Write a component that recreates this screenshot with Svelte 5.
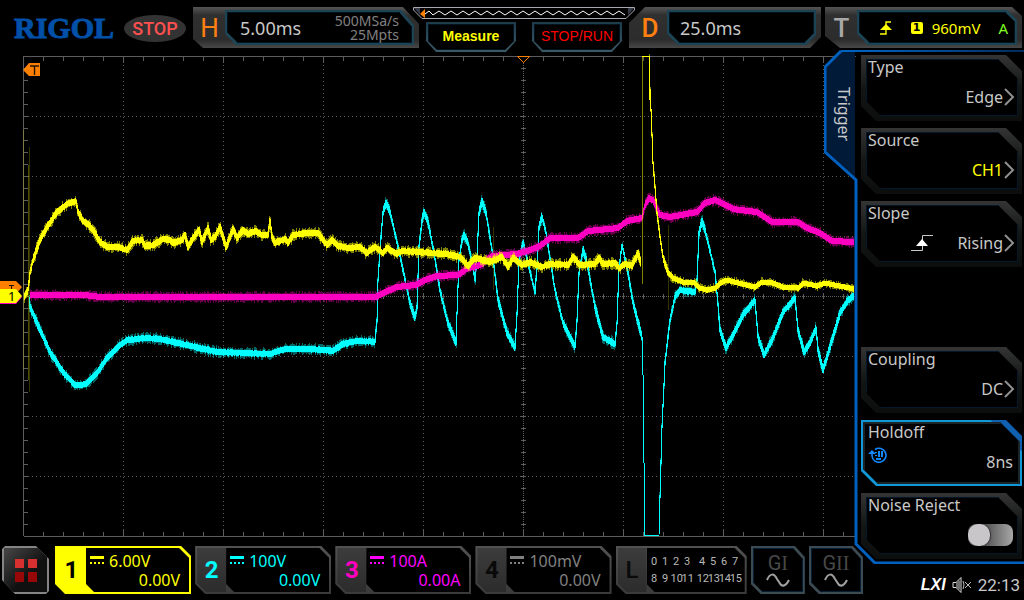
<script lang="ts">
  type Point = [number, number];

  let noiseReject = $state(false);

  const menu = [
    { label: 'Type', value: 'Edge' },
    { label: 'Source', value: 'CH1', accent: true },
    { label: 'Slope', value: 'Rising', icon: 'rising' },
    null,
    { label: 'Coupling', value: 'DC' },
    { label: 'Holdoff', value: '8ns', icon: 'knob', active: true }
  ];

  const channels = [
    { id: '1', scale: '6.00V', offset: '0.00V', tone: 'yellow' },
    { id: '2', scale: '100V', offset: '0.00V', tone: 'cyan' },
    { id: '3', scale: '100A', offset: '0.00A', tone: 'magenta' },
    { id: '4', scale: '100mV', offset: '0.00V', tone: 'off' }
  ];

  const yellow: Point[] = [
    [24, 297], [28, 290], [30, 273], [33, 260], [40, 240], [47, 227], [57, 212], [67, 204], [76, 201],
    [78, 212], [83, 221], [89, 225], [95, 233], [100, 242], [107, 247], [117, 247], [127, 250], [133, 241],
    [142, 240], [145, 246], [153, 245], [163, 239], [170, 240], [173, 243], [182, 240], [185, 235], [188, 247],
    [193, 238], [199, 230], [202, 242], [208, 228], [211, 240], [215, 237], [220, 227], [226, 247], [233, 229],
    [237, 238], [243, 230], [248, 234], [255, 231], [262, 235], [268, 235], [270, 220], [272, 237], [275, 243],
    [285, 239], [288, 243], [293, 235], [307, 233], [318, 233], [323, 240], [327, 245], [332, 240], [338, 246],
    [348, 248], [360, 247], [367, 253], [375, 247], [383, 253], [387, 248], [397, 254], [402, 251], [420, 252],
    [430, 253], [447, 254], [460, 257], [468, 266], [475, 258], [490, 262], [502, 257], [508, 267], [513, 258],
    [522, 265], [530, 262], [542, 267], [550, 264], [568, 265], [573, 257], [580, 265], [595, 264], [599, 258],
    [603, 264], [615, 263], [619, 268], [625, 264], [632, 266], [638, 253], [641, 263]
  ];
  const yellowTail: Point[] = [
    [649, 57], [650, 90], [651, 110], [652, 135], [653, 163], [655, 187], [657, 213], [660, 237], [663, 257],
    [668, 272], [673, 278], [683, 282], [695, 283], [700, 288], [707, 290], [715, 288], [722, 282], [727, 280],
    [755, 287], [762, 282], [773, 283], [783, 287], [798, 288], [803, 283], [817, 286], [825, 283], [854, 289]
  ];
  const magenta: Point[] = [
    [30, 295], [85, 295], [100, 297], [375, 297], [383, 293], [397, 287], [415, 285], [425, 280], [437, 276],
    [458, 275], [468, 268], [480, 265], [492, 256], [517, 254], [530, 250], [540, 246], [550, 238], [578, 238],
    [588, 231], [618, 228], [627, 221], [642, 218], [645, 205], [649, 198], [653, 200], [660, 215], [670, 217],
    [697, 212], [705, 203], [715, 200], [722, 203], [733, 209], [757, 212], [772, 222], [798, 222], [807, 228],
    [820, 233], [832, 241], [854, 242]
  ];
  const cyan: Point[] = [
    [29, 298], [30, 307], [40, 330], [50, 352], [63, 372], [75, 385], [82, 385], [87, 383], [97, 373],
    [107, 358], [117, 348], [127, 340], [147, 338], [160, 339], [187, 345], [217, 352], [270, 354], [285, 349],
    [310, 349], [333, 351], [343, 344], [357, 341], [375, 342], [377, 320], [378, 280], [381, 237], [383, 212],
    [386, 203], [390, 212], [395, 233], [403, 270], [410, 303], [415, 318], [417, 307], [419, 247], [422, 220],
    [424, 212], [428, 222], [433, 247], [440, 290], [447, 320], [456, 343], [457, 313], [459, 260], [462, 240],
    [464, 235], [468, 243], [473, 267], [475, 280], [477, 257], [479, 213], [482, 201], [486, 213], [492, 250],
    [498, 300], [507, 333], [515, 348], [517, 313], [519, 260], [523, 242], [528, 263], [535, 292], [537, 267],
    [539, 227], [542, 216], [546, 233], [555, 290], [563, 323], [575, 347], [577, 320], [579, 273], [583, 249],
    [587, 263], [595, 307], [603, 337], [615, 344], [617, 323], [619, 267], [622, 245], [627, 267], [633, 303],
    [642, 337]
  ];
  const cyanTail: Point[] = [
    [659, 533], [660, 497], [662, 427], [665, 363], [670, 320], [675, 297], [680, 290], [695, 292], [697, 280],
    [699, 233], [702, 221], [705, 230], [715, 272], [717, 293], [720, 330], [726, 348], [733, 335], [743, 315],
    [755, 300], [758, 337], [764, 355], [772, 340], [783, 312], [795, 298], [798, 330], [804, 352], [810, 343],
    [816, 328], [818, 350], [823, 370], [830, 347], [840, 313], [848, 300], [854, 296]
  ];

  // repeatable pseudo noise, 0..1
  function noise(n: number) {
    const v = Math.sin(n * 12.9898) * 43758.5453;
    return v - Math.floor(v);
  }

  function levelAt(points: Point[], x: number) {
    const last = points.length - 1;
    if (x <= points[0][0]) return points[0][1];
    if (x >= points[last][0]) return points[last][1];
    const i = points.findIndex((p) => p[0] > x);
    const [x0, y0] = points[i - 1];
    const [x1, y1] = points[i];
    return y0 + ((y1 - y0) * (x - x0)) / (x1 - x0);
  }

  // one vertical bar per pixel column, the way a sampled trace is plotted
  function trace(points: Point[], thick: number, jitter = 0) {
    let d = '';
    for (let x = points[0][0]; x < points[points.length - 1][0]; x++) {
      const a = levelAt(points, x);
      const b = levelAt(points, x + 1);
      const steep = Math.abs(a - b) > 4;
      const half = steep ? 1 : thick / 2;
      const top = Math.round(Math.min(a, b) - half - noise(x) * jitter);
      const bottom = Math.round(Math.max(a, b) + half + noise(x + 500) * jitter);
      d += `M${x + 0.5} ${top}V${bottom}`;
    }
    return d;
  }

  const range = (from: number, to: number, step: number) =>
    Array.from({ length: Math.floor((to - from) / step) + 1 }, (_, i) => from + i * step);

  const columns = range(123, 823, 100);
  const rows = range(116, 476, 60);
  const xTicks = range(43, 843, 20).map((x) => `M${x + 0.5} 57v4M${x + 0.5} 294v5M${x + 0.5} 532v4`).join('');
  const yTicks = range(68, 524, 12).map((y) => `M24 ${y + 0.5}h4M521 ${y + 0.5}h5`).join('');
</script>

{#snippet sine()}
  <svg class="sine" viewBox="0 0 24 14" aria-hidden="true">
    <path d="M1 7C4 0 8 0 11 6L13 9C16 15 20 13 23 7" fill="none" stroke="#a0a0a0" stroke-width="2" />
  </svg>
{/snippet}

<div class="scope">
  <header>
    <div class="logo">RIGOL</div>
    <div class="run-state">STOP</div>

    <section class="frame horizontal">
      <b class="letter orange thin">H</b>
      <div class="screen">
        <div class="glass">
          <span class="main-value">5.00ms</span>
          <span class="rate">500MSa/s<br />25Mpts</span>
        </div>
      </div>
    </section>

    <div class="middle">
      <svg class="memory" viewBox="0 0 222 12" preserveAspectRatio="none" aria-hidden="true">
        <path d="M.5.5H221.5V3L213 11.5H9L.5 3Z" fill="#000" stroke="#a8a8b0" />
        <path d="M1 1H7V8ZM221 1H215V8Z" fill="#383c48" />
        <path d="M12 7l4 -3 4 4 {range(0, 15, 1).map(() => 'l6 -4 6 4').join('')}" fill="none" stroke="#fff" />
        <path d="M7 7L12 2V11Z" fill="#ff8000" />
      </svg>
      <div class="quick">
        <button class="measure"><span>Measure</span></button>
        <button class="stop-run"><span>STOP/RUN</span></button>
      </div>
    </div>

    <section class="frame delay">
      <b class="letter orange">D</b>
      <div class="screen">
        <div class="glass"><span class="main-value">25.0ms</span></div>
      </div>
    </section>

    <section class="frame trig">
      <b class="letter">T</b>
      <div class="screen">
        <div class="glass">
          <svg width="12" height="14" viewBox="0 0 12 14" aria-hidden="true">
            <path d="M0 13H6V1H11" fill="none" stroke="#ff0" stroke-width="1.4" />
            <path d="M6 3L12 9H0Z" fill="#ff0" />
          </svg>
          <span class="badge">1</span>
          <span class="level">960mV</span>
          <span class="auto">A</span>
        </div>
      </div>
    </section>
  </header>

  <main>
    <div class="left">
      <svg class="plot" viewBox="0 50 856 490" role="img" aria-label="Waveforms">
        <g stroke="#5c5c5c" fill="none" shape-rendering="crispEdges">
          <path d="M23.5 536V56.5H856M23.5 536.5H856" />
          <path d={xTicks + yTicks} />
          {#each columns as x}
            <path d="M{x + 0.5} 57V536" stroke-dasharray="1 3" />
            <path d="M{x + 0.5} 57v6M{x + 0.5} 530v6" />
          {/each}
          {#each rows as y}
            <path d="M24 {y + 0.5}H856" stroke-dasharray="1 3" />
          {/each}
          <path d="M24 296.5H856M523.5 57V536" stroke-dasharray="1 1" />
        </g>

        <path d="M517.5 56.5H529.5L523.5 62.5Z" fill="#000" stroke="#ff8000" />

        <g fill="none" shape-rendering="crispEdges">
          <g stroke="#0ff">
            <path d={trace(cyan, 5, 4)} opacity="0.4" />
            <path d={trace(cyan, 5, 1)} />
            <path d={trace(cyanTail, 5, 4)} opacity="0.4" />
            <path d={trace(cyanTail, 5, 1)} />
            <path d="M642.5 337V375M643.5 375V463M644.5 463V535H659" />
          </g>
          <g stroke="#ff00c0">
            <path d={trace(magenta, 6, 3)} opacity="0.4" />
            <path d={trace(magenta, 6)} />
          </g>
          <g stroke="#ff0">
            <path d="M642.5 57V284" opacity="0.5" />
            <path d="M28.5 165V380" opacity="0.3" />
            <path d="M23.5 130V370M29.5 147V392M668.5 225V310M493.5 227V290" opacity="0.2" />
            <path d={trace(yellow, 5, 4)} opacity="0.5" />
            <path d={trace(yellow, 5, 1)} />
            <path d={trace(yellowTail, 4, 3)} opacity="0.5" />
            <path d={trace(yellowTail, 5)} />
            <path d="M642 56.5H650" />
            <path d="M649.5 57V100" />
          </g>
        </g>

        <path d="M23 70L29 63H40V76H29Z" fill="#ff8000" />
        <path d="M30 66H39M34.5 66V75" stroke="#221400" stroke-width="1.4" />
        <path d="M0 281H16L22 287L16 294H0Z" fill="#ff8000" />
        <path d="M9 285.5H14M11.5 285V289" stroke="#221400" />
        <path d="M0 290H16L22 297L16 304H0Z" fill="#ff00c0" />
        <path d="M0 289H16L22 296L16 303H0Z" fill="#ff0" />
        <text x="8" y="301" font-size="13">1</text>
      </svg>

      <footer>
        <button class="home" aria-label="Menu">
          <svg width="22" height="23" viewBox="0 0 22 23" aria-hidden="true">
            <path d="M0 0H9V9H0ZM13 0H22V9H13Z" fill="#d83030" />
            <path d="M0 13H9V23H0ZM13 13H22V23H13Z" fill="#980808" />
          </svg>
        </button>

        {#each channels as ch}
          <button class="channel {ch.tone}">
            <b>{ch.id}</b>
            <span class="readout">
              <span class="scale">
                <svg width="14" height="9" viewBox="0 0 14 9" aria-hidden="true">
                  <path d="M0 1.5H14" stroke="currentColor" stroke-width="3" />
                  <path d="M0 7H14" stroke="currentColor" stroke-width="2" stroke-dasharray="2 2" />
                </svg>
                {ch.scale}
              </span>
              <span class="offset">{ch.offset}</span>
            </span>
          </button>
        {/each}

        <button class="channel logic">
          <b>L</b>
          <span class="readout bits">
            {#each range(0, 15, 1) as bit}
              <span>{bit}</span>
            {/each}
          </span>
        </button>

        {#each ['I', 'II'] as gen}
          <button class="generator">
            <span class="inner">
              <span class="gen-name">G<i>{gen}</i></span>
              {@render sine()}
            </span>
          </button>
        {/each}
      </footer>
    </div>

    <aside>
      <div class="panel">
        <svg class="outline" viewBox="0 0 200 514" preserveAspectRatio="none" aria-hidden="true">
          <defs>
            <linearGradient id="fade" gradientUnits="userSpaceOnUse" x1="40" x2="200" y1="0" y2="0">
              <stop offset="0" stop-color="#0060c0" />
              <stop offset="1" stop-color="#002c5c" />
            </linearGradient>
          </defs>
          <path d="M17 1H31V129L1 102V17Z" fill="#001a38" />
          <path d="M200 1H17" stroke="url(#fade)" stroke-width="2" />
          <path d="M17 1L1 17V102L32 130V494L51 513H200" fill="none" stroke="#0060c0" stroke-width="3" />
        </svg>
        <h2>Trigger</h2>

        {#each menu as item}
          {#if item}
            <button class="item" class:active={item.active}>
              <span class="label">{item.label}</span>
              <span class="row">
                {#if item.icon === 'rising'}
                  <svg class="rising" width="22" height="17" viewBox="0 0 22 17" aria-hidden="true">
                    <path d="M0 15.5H11.5V.5H22" fill="none" stroke="#c8c8c8" />
                    <path d="M11 4L17 11H5Z" fill="#fff" />
                  </svg>
                {:else if item.icon === 'knob'}
                  <svg class="knob" width="19" height="16" viewBox="0 0 19 16" aria-hidden="true">
                    <path d="M7 2.5A7 7 0 1 1 4 9V5" fill="none" stroke="#1088ff" stroke-width="1.6" />
                    <path d="M0 7L4 3L8 7Z" fill="#1088ff" />
                    <path d="M8 5v1M8 8v1M11 4v6M14 4v6M8 12h5" stroke="#1088ff" stroke-width="2" />
                  </svg>
                {/if}
                <span class="value" class:accent={item.accent}>{item.value}</span>
                {#if !item.active}
                  <svg width="11" height="18" viewBox="0 0 11 18" aria-hidden="true">
                    <path d="M1 1L9 9L1 17" fill="none" stroke="#909090" stroke-width="2" />
                  </svg>
                {/if}
              </span>
            </button>
          {:else}
            <div class="blank"></div>
          {/if}
        {/each}

        <label class="item">
          <span class="label">Noise Reject</span>
          <span class="row"><input type="checkbox" bind:checked={noiseReject} /></span>
        </label>
      </div>

      <div class="status">
        <em>LXI</em>
        <svg width="20" height="16" viewBox="0 0 20 16" aria-hidden="true">
          <path d="M1 5.5H4L9 .5V15.5L4 10.5H1ZM5 5V11M7 3.5V12.5" fill="none" stroke="#ddd" />
          <path d="M11 4Q13 8 11 12M13 5L19 11M19 5L13 11" fill="none" stroke="#bbb" />
        </svg>
        <time>22:13</time>
      </div>
    </aside>
  </main>
</div>

<style>
  :global(body) {
    margin: 0;
    background: #000;
  }

  .scope {
    display: flex;
    flex-direction: column;
    min-height: 100vh;
    overflow: hidden;
    background: #000;
    color: #c8c8c8;
    font: 16px/18px "Noto Sans", "Open Sans", sans-serif;
  }

  button {
    padding: 0;
    border: 0;
    background: none;
    color: inherit;
    font: inherit;
    cursor: pointer;
  }

  svg {
    display: block;
    flex: none;
  }

  /* header */
  header {
    display: flex;
    align-items: flex-start;
    height: 43px;
    padding: 7px 2px 0 14px;
  }

  .logo {
    width: 110px;
    color: #0050a8;
    font: bold 30px/42px "Liberation Serif", serif;
    -webkit-text-stroke: 1px #0050a8;
  }

  .run-state {
    width: 62px;
    height: 27px;
    margin: 8px 7px 0 0;
    border-radius: 50%;
    background: #333;
    color: #ff5050;
    font: 500 18px/28px Roboto, sans-serif;
    text-align: center;
  }

  .frame {
    display: flex;
    box-sizing: border-box;
    height: 41px;
    padding: 3px 5px 3px 0;
    background: linear-gradient(#545454, #303030 20%, #2c2c2c 80%, #484848);
  }

  .horizontal {
    flex: 1 1 226px;
    clip-path: polygon(0 0, calc(100% - 16px) 0, 100% 17px, 100% 100%, 10px 100%, 0 calc(100% - 9px));
  }

  .delay {
    flex: 1 1 192px;
    margin-right: 4px;
    clip-path: polygon(16px 0, 100% 0, 100% calc(100% - 11px), calc(100% - 11px) 100%, 0 100%, 0 16px);
  }

  .trig {
    flex: 1 1 197px;
    clip-path: polygon(0 0, calc(100% - 10px) 0, 100% 9px, 100% 100%, 15px 100%, 0 calc(100% - 12px));
  }

  .letter {
    flex: none;
    width: 31px;
    padding-left: 1px;
    color: #a8a8a8;
    font: 500 26px/36px Roboto, sans-serif;
    text-align: center;
  }

  .delay .letter {
    width: 34px;
    padding-left: 4px;
  }

  .letter.thin {
    font-weight: 400;
  }

  .orange {
    color: #ff8010;
  }

  .screen {
    flex: 1;
    display: flex;
    padding: 2px;
    background: #1c4454;
  }

  .glass {
    flex: 1;
    display: flex;
    align-items: center;
    padding: 0 12px;
    border: 1px solid #04141f;
    background: #000;
  }

  .horizontal .screen,
  .horizontal .glass {
    clip-path: polygon(0 0, calc(100% - 13px) 0, 100% 15px, 100% 100%, 11px 100%, 0 calc(100% - 11px));
  }

  .delay .screen,
  .delay .glass {
    clip-path: polygon(0 0, 100% 0, 100% calc(100% - 10px), calc(100% - 10px) 100%, 11px 100%, 0 calc(100% - 11px));
  }

  .trig .screen,
  .trig .glass {
    clip-path: polygon(0 0, calc(100% - 10px) 0, 100% 10px, 100% 100%, 11px 100%, 0 calc(100% - 11px));
  }

  .horizontal .glass {
    justify-content: space-between;
  }

  .delay .glass {
    padding-left: 10px;
  }

  .trig .glass {
    justify-content: flex-end;
    padding: 0 6px;
    color: #ff0;
    font-size: 15px;
  }

  .main-value {
    font-size: 18px;
  }

  .rate {
    color: #808080;
    font-size: 14px;
    line-height: 14px;
    text-align: right;
  }

  .badge {
    width: 12px;
    margin: 0 9px 0 19px;
    border-radius: 2px;
    background: #ff0;
    color: #000;
    font: bold 11px/12px "DejaVu Sans", sans-serif;
    text-align: center;
  }

  .auto {
    margin-left: 18px;
    color: #80ff20;
  }

  .middle {
    flex: 1 1 222px;
    margin: 0 -6px;
    position: relative;
  }

  .memory {
    width: 100%;
    height: 12px;
  }

  .quick {
    display: flex;
    justify-content: space-between;
    padding: 3px 13px 0;
  }

  .quick button {
    display: flex;
    width: 90px;
    height: 30px;
    padding: 2px;
    background: linear-gradient(#1c3c4c, #3c5866);
    clip-path: polygon(0 0, 100% 0, 100% 19px, calc(100% - 10px) 100%, 10px 100%, 0 19px);
  }

  .quick span {
    flex: 1;
    border: 1px solid #04141f;
    background: #000;
    clip-path: polygon(0 0, 100% 0, 100% 17px, calc(100% - 9px) 100%, 9px 100%, 0 17px);
    font: 14px/22px "Liberation Sans", sans-serif;
  }

  .quick .measure span {
    color: #ff0;
    font-weight: bold;
  }

  .stop-run {
    color: #f00;
  }

  /* plot */
  main {
    flex: 1;
    display: flex;
  }

  .left {
    flex: 1;
    min-width: 0;
  }

  .plot {
    width: 100%;
    height: auto;
    font-family: "Noto Sans", sans-serif;
  }

  /* channel bar */
  footer {
    display: flex;
    gap: 4px;
    margin-right: -7px;
    padding: 6px 0 6px 2px;
  }

  .home {
    display: grid;
    place-items: center;
    width: 47px;
    height: 48px;
    margin-right: 2px;
    background: linear-gradient(135deg, #484848, #101010 60%) 2px 2px / 43px 44px no-repeat, #848484;
    clip-path: polygon(3px 0, 34px 0, 100% 13px, 100% 45px, 44px 100%, 13px 100%, 0 34px, 0 3px);
  }

  .channel {
    flex: 1 1 136px;
    display: flex;
    height: 48px;
    padding: 2px;
    background: linear-gradient(#525252, #3a3a3a);
    clip-path: polygon(0 0, calc(100% - 10px) 0, 100% 10px, 100% 100%, 10px 100%, 0 calc(100% - 10px));
  }

  .channel b {
    flex: none;
    width: 29px;
    align-self: stretch;
    background: linear-gradient(#3c3c3c, #2c2c2c);
    clip-path: polygon(0 0, 100% 0, 100% 100%, 9px 100%, 0 calc(100% - 9px));
    font: bold 24px/44px Roboto, sans-serif;
    text-align: center;
  }

  .readout {
    flex: 1;
    display: flex;
    flex-direction: column;
    padding: 4px 9px 0 4px;
    background: #000;
    clip-path: polygon(0 0, calc(100% - 10px) 0, 100% 10px, 100% 100%, 8px 100%, 0 calc(100% - 8px));
  }

  .scale {
    display: flex;
    gap: 5px;
    line-height: 19px;
  }

  .scale svg {
    margin-top: 4px;
  }

  .offset {
    line-height: 19px;
    text-align: right;
  }

  .yellow {
    background: #ff0;
    color: #ff0;
  }

  .yellow b {
    background: #ff0;
    color: #000;
  }

  .cyan {
    color: #0ff;
  }

  .magenta {
    color: #f0f;
  }

  .magenta b {
    color: #ff00c0;
  }

  .off {
    color: #808080;
  }

  .off b,
  .logic b {
    color: #0a0a0a;
  }

  .logic {
    flex-basis: 131px;
  }

  .logic b {
    font-weight: 500;
  }

  .bits {
    display: grid;
    grid-template-columns: repeat(4, minmax(0, 1fr)) 4px repeat(4, minmax(0, 1fr));
    align-content: center;
    padding: 0 4px 0 2px;
    color: #b8b8b8;
    font: 11px/17px "Liberation Sans Narrow", Roboto, sans-serif;
    text-align: center;
  }

  .bits span:nth-child(8n + 5) {
    grid-column: 6;
  }

  .generator {
    flex: 1 1 54px;
    display: flex;
    height: 48px;
    padding: 2px;
    background: #3c4a52;
  }

  .generator,
  .inner {
    clip-path: polygon(0 0, calc(100% - 10px) 0, 100% 11px, 100% 100%, 10px 100%, 0 calc(100% - 10px));
  }

  .inner {
    flex: 1;
    display: flex;
    flex-direction: column;
    align-items: center;
    border: 1px solid #042038;
    background: #000;
  }

  .gen-name {
    padding-top: 4px;
    color: #484848;
    font: 20px/20px Roboto, sans-serif;
  }

  .gen-name i {
    font: 20px/20px "Liberation Serif", serif;
  }

  .sine {
    width: 24px;
    height: 14px;
  }

  /* trigger menu */
  aside {
    flex: none;
    width: 168px;
  }

  .panel {
    position: relative;
    display: flex;
    flex-direction: column;
    gap: 7px;
    padding: 5px 2px 5px 5px;
  }

  .outline {
    position: absolute;
    top: 0;
    left: -32px;
    width: 200px;
    height: 100%;
    pointer-events: none;
  }

  h2 {
    position: absolute;
    top: 37px;
    left: -21px;
    margin: 0;
    font-size: 16px;
    font-weight: 400;
    line-height: 18px;
    writing-mode: vertical-rl;
  }

  .item {
    position: relative;
    display: flex;
    flex-direction: column;
    justify-content: space-between;
    box-sizing: border-box;
    height: 66px;
    padding: 3px 7px 14px 7px;
    background: linear-gradient(#343434, #141616 50%, #0c0e0e);
    text-align: left;
    z-index: 0;
  }

  .item {
    clip-path: polygon(0 0, calc(100% - 16px) 0, 100% 16px, 100% 100%, 15px 100%, 0 calc(100% - 15px));
  }

  .item::before {
    content: "";
    position: absolute;
    inset: 4px 4px 5px 5px;
    z-index: -1;
    border: 1px solid #04182c;
    background: #000;
    clip-path: polygon(0 0, calc(100% - 20px) 0, 100% 20px, 100% 100%, 15px 100%, 0 calc(100% - 15px));
  }

  .item.active {
    background: linear-gradient(45deg, #1098d8 calc(100% - 22px), #1060b0 0);
  }

  .item.active::before {
    inset: 2px;
    border: 2px solid #1c2428;
  }

  .blank {
    height: 66px;
  }

  .label {
    line-height: 18px;
  }

  .row {
    display: flex;
    justify-content: flex-end;
    align-items: center;
    gap: 1px;
    height: 20px;
  }

  .active .row {
    padding-right: 2px;
  }

  .accent {
    color: #ff0;
  }

  .rising {
    margin-right: 23px;
  }

  .knob {
    margin: 0 auto 14px 0;
  }

  input {
    appearance: none;
    width: 45px;
    height: 22px;
    margin: 0 2px 0 0;
    border-radius: 8px;
    background: linear-gradient(90deg, #555 40%, #a8a8a8);
  }

  input::before {
    content: "";
    display: block;
    width: 22px;
    height: 22px;
    border-radius: 10px;
    background: #c8c6c8;
    box-shadow: 1px 0 1px #333;
  }

  input:checked::before {
    margin-left: auto;
  }

  .status {
    display: flex;
    justify-content: flex-end;
    align-items: center;
    gap: 6px;
    padding: 11px 4px 0 0;
  }

  .status em {
    color: #fff;
    font: italic bold 16px/18px "Liberation Sans", sans-serif;
  }

  .status time {
    font: 17px/20px Roboto, sans-serif;
  }
</style>
